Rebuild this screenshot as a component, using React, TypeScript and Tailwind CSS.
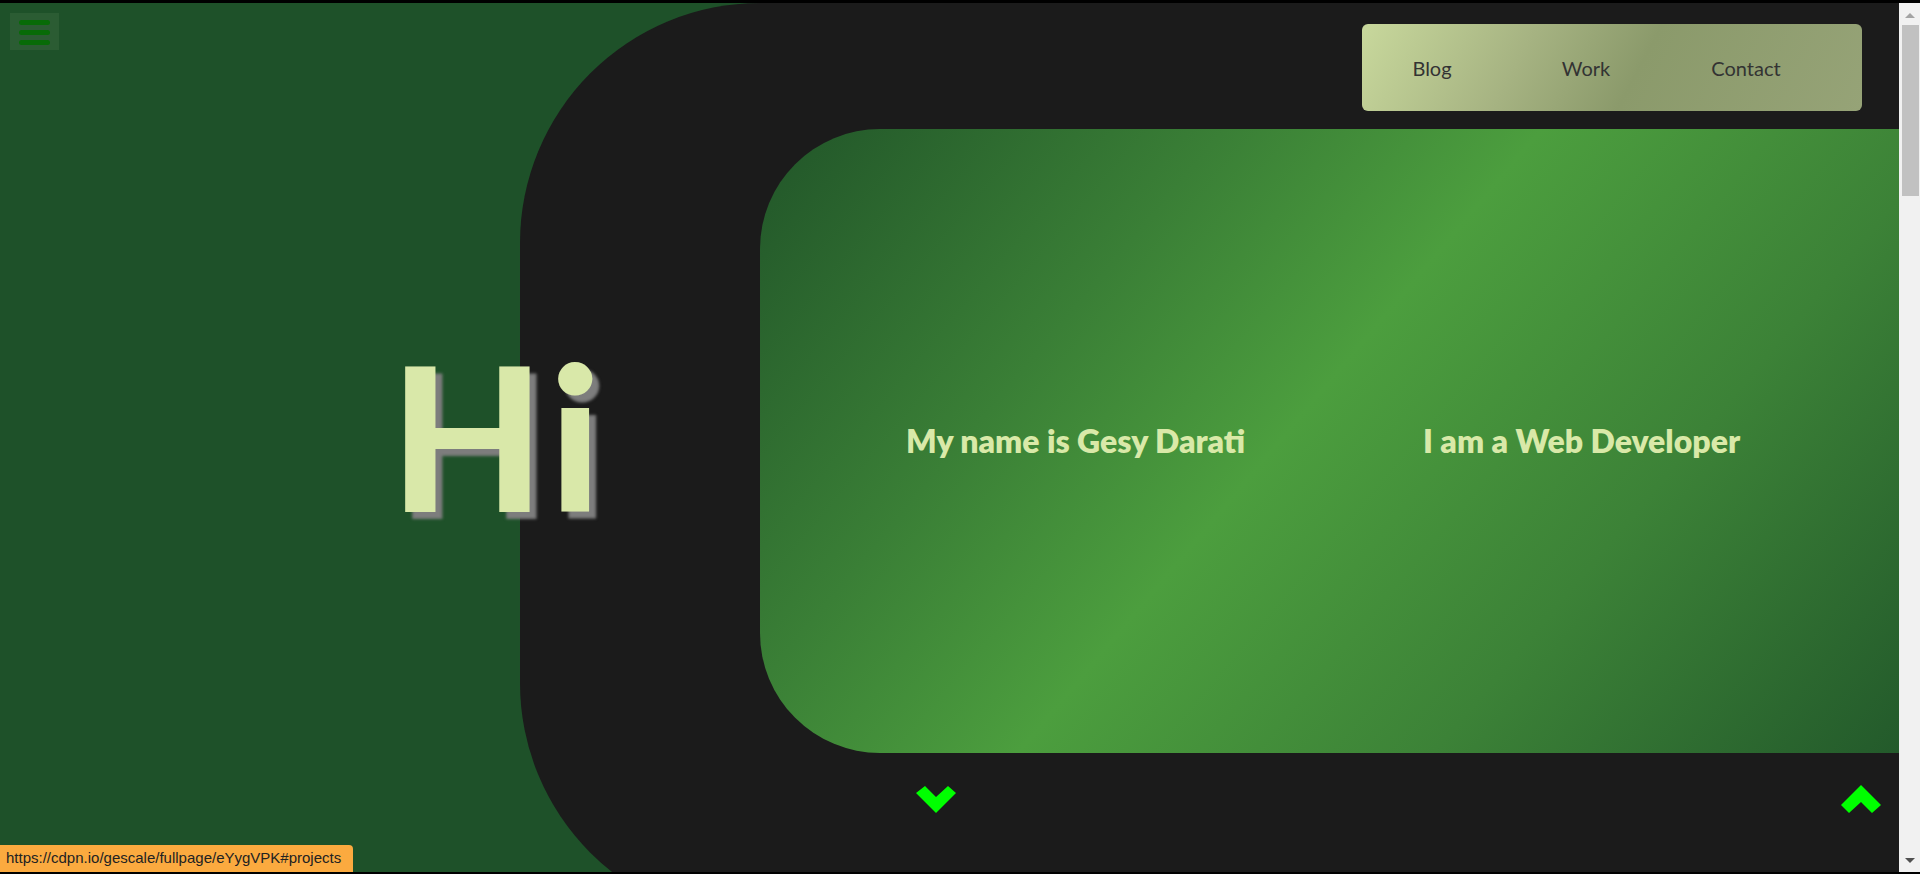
import React from "react"

const Chevron = ({ up }: { up?: boolean }) => (
  <svg width="40" height="28" viewBox="0 0 40 28" className="block">
    {up ? (
      <polygon points="0,20 20,0 40,20 31,28 20,17 8,28" fill="#00ff00" />
    ) : (
      <polygon points="0,7 9,0 20,11 32,0 40,7 20,27" fill="#00ff00" />
    )}
  </svg>
)

const Nav = () => {
  return (
    <nav className="flex h-[87px] w-[500px] items-center rounded-[6px] bg-[linear-gradient(118deg,#c8d89c_0%,#a6b382_32%,#8b9a6b_55%,#96a377_100%)] text-[20px] text-[#333] [font-family:Lato,'Noto_Sans',sans-serif]">
      <a href="#" className="w-[140px] text-center">Blog</a>
      <a href="#" className="w-[168px] text-center">Work</a>
      <a href="#" className="w-[152px] text-center">Contact</a>
    </nav>
  )
}

const Scrollbar = () => (
  <div className="relative flex w-[21px] flex-col items-center bg-[#f1f1f1]">
    <div className="mt-[10px] h-0 w-0 border-x-[5px] border-b-[5px] border-x-transparent border-b-[#a3a3a3]" />
    <div className="ml-[1px] mt-[7px] h-[171px] w-[17px] bg-[#c1c1c1]" />
    <div className="mt-auto mb-[9px] h-0 w-0 border-x-[5px] border-t-[5px] border-x-transparent border-t-[#505050]" />
  </div>
)

export default function App() {
  return (
    <div className="h-[874px] w-[1920px] overflow-hidden border-t-[3px] border-b-2 border-black bg-black">
      <div className="flex h-[869px]">
        <main className="relative flex-1 overflow-hidden bg-[#1e5129]">
          {/* menu button */}
          <button className="absolute left-[10px] top-[10px] z-10 flex h-[37px] w-[49px] flex-col gap-[5px] bg-[#2b5c33] pl-[9px] pt-[7px]">
            <span className="h-[5px] w-[31px] rounded-full bg-[#076b07]" />
            <span className="h-[5px] w-[31px] rounded-full bg-[#076b07]" />
            <span className="h-[5px] w-[31px] rounded-full bg-[#076b07]" />
          </button>

          <section className="ml-[520px] flex h-[920px] flex-col rounded-l-[240px] bg-[#1b1b1b] pt-[21px]">
            <div className="flex justify-end pr-[37px]">
              <Nav />
            </div>

            <div className="ml-[240px] mt-[18px] flex h-[624px] items-center rounded-l-[120px] bg-[linear-gradient(130deg,#215529_0%,#3a7f36_28%,#4c9e3e_47%,#3c8237_72%,#235a2b_100%)] text-[32px] font-extrabold text-[#d9e9a8] [font-family:Lato,'Noto_Sans',sans-serif]">
              <h2 className="w-[663px] pl-[146px]">My name is Gesy Darati</h2>
              <h2>I am a Web Developer</h2>
            </div>

            <div className="mt-[33px] flex items-start justify-between pl-[396px] pr-[18px]">
              <a href="#projects"><Chevron /></a>
              <a href="#top" className="-mt-[1px]"><Chevron up /></a>
            </div>
          </section>

          <h1 className="absolute left-[390px] top-[332px] text-[200px] font-black leading-none tracking-[6px] text-[#d9e8a9] [font-family:Lato,sans-serif] [text-shadow:7px_7px_3px_#7d7d7d]">
            Hi
          </h1>

          <div className="absolute bottom-0 left-0 flex h-[27px] w-[353px] items-center rounded-tr-[4px] bg-[#fbaa3f] pl-[6px] text-[15px] text-[#222] [font-family:'Liberation_Sans',Arial,sans-serif]">
            https://cdpn.io/gescale/fullpage/eYygVPK#projects
          </div>
        </main>
        <Scrollbar />
      </div>
    </div>
  )
}
